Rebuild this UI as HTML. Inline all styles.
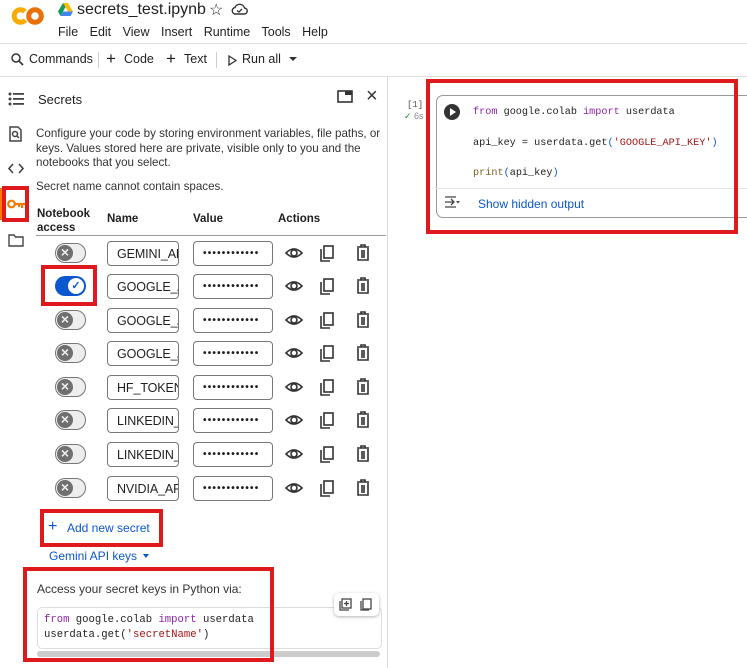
<!DOCTYPE html>
<html><head><meta charset="utf-8"><style>
*{box-sizing:border-box;margin:0;padding:0}
body{width:747px;height:668px;overflow:hidden;background:#fff;font-family:"Liberation Sans",Arial,sans-serif;color:#1f1f1f;position:relative}
.a{position:absolute}
.mono{font-family:"Liberation Mono",monospace}
.red{position:absolute;border:4px solid #e0191c}
.tg{position:absolute;left:55px;width:31px;height:20px;border-radius:10px;border:1px solid #777;background:#eee}
.tg::after{content:"×";position:absolute;left:1px;top:1px;width:16px;height:16px;border-radius:50%;background:#6f6f6f;color:#eee;font-size:14px;line-height:15px;text-align:center;font-weight:bold}
.nm{position:absolute;left:107px;width:72px;height:25px;border:1px solid #777;border-radius:4px;font-size:12.5px;padding:5px 0 0 9px;overflow:hidden;white-space:nowrap;letter-spacing:-.1px}
.vl{position:absolute;left:193px;width:80px;height:25px;border:1px solid #777;border-radius:4px;font-size:10px;padding:6px 0 0 9px;letter-spacing:1.2px;font-weight:bold;overflow:hidden;white-space:nowrap}
</style></head><body>
<!-- header -->
<svg class="a" style="left:11px;top:6px" width="34" height="20" viewBox="0 0 34 20"><circle cx="9.5" cy="10" r="6.3" fill="none" stroke="#f9ab00" stroke-width="5" stroke-dasharray="30 10" transform="rotate(40 9.5 10)"/><circle cx="24" cy="10" r="6.3" fill="none" stroke="#e8710a" stroke-width="5"/></svg>
<svg class="a" style="left:58px;top:3px" width="15" height="13" viewBox="0 0 15 13"><path d="M5 0h5l5 8.5h-5z" fill="#fbbc04"/><path d="M5 0L0 8.5l2.5 4.5L7.5 4z" fill="#0f9d58"/><path d="M2.5 13h10l2.5-4.5H5z" fill="#4285f4"/></svg>
<div class="a" style="left:77px;top:1px;font-size:16px;color:#1f1f1f">secrets_test.ipynb</div>
<div class="a" style="left:209px;top:0px;font-size:16px">☆</div>
<svg class="a" style="left:231px;top:3px" width="17" height="12" viewBox="0 0 17 12"><path d="M4 11h9a3 3 0 0 0 .5-6A5 5 0 0 0 4 4.5 3.3 3.3 0 0 0 4 11z" fill="none" stroke="#333" stroke-width="1.4"/><path d="M6 7.5l2 1.5 3-3" fill="none" stroke="#333" stroke-width="1.3"/></svg>
<div class="a" style="left:58px;top:25px;font-size:12.5px;word-spacing:8px">File Edit View Insert Runtime Tools Help</div>
<div class="a" style="left:0;top:43px;width:747px;height:1px;background:#ddd"></div>
<!-- toolbar -->
<svg class="a" style="left:11px;top:53px" width="13" height="13" viewBox="0 0 13 13"><circle cx="5" cy="5" r="4" fill="none" stroke="#333" stroke-width="1.5"/><path d="M8 8l4 4" stroke="#333" stroke-width="1.6"/></svg>
<div class="a" style="left:29px;top:52px;font-size:12.5px">Commands</div>
<div class="a" style="left:98px;top:52px;width:1px;height:16px;background:#ccc"></div>
<div class="a" style="left:106px;top:49px;font-size:17px;font-weight:300">+</div>
<div class="a" style="left:124px;top:52px;font-size:12.5px">Code</div>
<div class="a" style="left:166px;top:49px;font-size:17px;font-weight:300">+</div>
<div class="a" style="left:184px;top:52px;font-size:12.5px">Text</div>
<div class="a" style="left:216px;top:52px;width:1px;height:16px;background:#ccc"></div>
<svg class="a" style="left:228px;top:55px" width="9" height="11" viewBox="0 0 9 11"><path d="M1 1l7 4.5L1 10z" fill="none" stroke="#333" stroke-width="1.3"/></svg>
<div class="a" style="left:242px;top:52px;font-size:12.5px">Run all</div>
<div class="a" style="left:289px;top:57px;width:0;height:0;border-left:4px solid transparent;border-right:4px solid transparent;border-top:4px solid #333"></div>
<div class="a" style="left:0;top:76px;width:747px;height:1px;background:#ddd"></div>
<div class="a" style="left:387px;top:77px;width:1px;height:591px;background:#ddd"></div>
<!-- left icons -->
<svg class="a" style="left:8px;top:92px" width="17" height="14" viewBox="0 0 17 14"><g fill="#444"><circle cx="2" cy="2" r="1.5"/><circle cx="2" cy="7" r="1.5"/><circle cx="2" cy="12" r="1.5"/><rect x="5" y="1" width="11" height="1.8"/><rect x="5" y="6" width="11" height="1.8"/><rect x="5" y="11" width="11" height="1.8"/></g></svg>
<svg class="a" style="left:9px;top:126px" width="13" height="16" viewBox="0 0 13 16"><path d="M1 1h8l3 3v11H1z" fill="none" stroke="#444" stroke-width="1.5"/><circle cx="6" cy="8" r="2.5" fill="none" stroke="#444" stroke-width="1.5"/><path d="M8 10l2 2" stroke="#444" stroke-width="1.5"/></svg>
<svg class="a" style="left:8px;top:163px" width="16" height="11" viewBox="0 0 16 11"><path d="M5 1L1 5.5 5 10M11 1l4 4.5L11 10" fill="none" stroke="#444" stroke-width="1.6"/></svg>
<div class="a" style="left:0;top:188px;width:3px;height:32px;background:#f57c00"></div>
<svg class="a" style="left:7px;top:199px" width="19" height="10" viewBox="0 0 19 10"><circle cx="4.5" cy="5" r="3.3" fill="none" stroke="#f57c00" stroke-width="2.2"/><path d="M8 5h10M15 5v4M12 5v3" stroke="#f57c00" stroke-width="2.2"/></svg>
<div class="red" style="left:2px;top:186px;width:27px;height:36px"></div>
<svg class="a" style="left:8px;top:234px" width="16" height="13" viewBox="0 0 16 13"><path d="M1 1h5l1.5 2H15v9H1z" fill="none" stroke="#444" stroke-width="1.4"/></svg>
<!-- panel -->
<div class="a" style="left:38px;top:92px;font-size:13px">Secrets</div>
<svg class="a" style="left:337px;top:90px" width="16" height="13" viewBox="0 0 16 13"><rect x="1" y="1" width="14" height="11" fill="none" stroke="#333" stroke-width="1.6"/><rect x="8" y="1" width="7" height="4" fill="#333"/></svg>
<div class="a" style="left:366px;top:85px;font-size:20px;color:#333">×</div>
<div class="a" style="left:36px;top:127px;font-size:11.6px;line-height:14.5px;width:345px;color:#333">Configure your code by storing environment variables, file paths, or keys. Values stored here are private, visible only to you and the notebooks that you select.</div>
<div class="a" style="left:36px;top:180px;font-size:11.6px;color:#333">Secret name cannot contain spaces.</div>
<div class="a" style="left:37px;top:207px;font-size:11.5px;font-weight:bold;line-height:14px">Notebook<br>access</div>
<div class="a" style="left:107px;top:213px;font-size:11.5px;font-weight:bold">Name</div>
<div class="a" style="left:193px;top:213px;font-size:11.5px;font-weight:bold">Value</div>
<div class="a" style="left:278px;top:213px;font-size:11.5px;font-weight:bold">Actions</div>
<div class="a" style="left:36px;top:235px;width:350px;height:1px;background:#999"></div>

<div class="tg" style="top:243px"></div><div class="nm" style="top:241px">GEMINI_AF</div><div class="vl" style="top:241px">••••••••••••</div>
<div class="a" style="left:55px;top:276px;width:31px;height:20px;border-radius:10px;background:#0b57d0"><div class="a" style="left:13px;top:2px;width:16px;height:16px;border-radius:50%;background:#fff;color:#0b57d0;font-size:11px;text-align:center;line-height:16px;font-weight:bold">✓</div></div>
<div class="red" style="left:41px;top:265px;width:56px;height:41px"></div>
<div class="nm" style="top:274px">GOOGLE_/</div><div class="vl" style="top:274px">••••••••••••</div>
<div class="tg" style="top:310px"></div><div class="nm" style="top:308px">GOOGLE_/</div><div class="vl" style="top:308px">••••••••••••</div>
<div class="tg" style="top:343px"></div><div class="nm" style="top:341px">GOOGLE_/</div><div class="vl" style="top:341px">••••••••••••</div>
<div class="tg" style="top:377px"></div><div class="nm" style="top:375px">HF_TOKEN</div><div class="vl" style="top:375px">••••••••••••</div>
<div class="tg" style="top:410px"></div><div class="nm" style="top:408px">LINKEDIN_</div><div class="vl" style="top:408px">••••••••••••</div>
<div class="tg" style="top:444px"></div><div class="nm" style="top:442px">LINKEDIN_</div><div class="vl" style="top:442px">••••••••••••</div>
<div class="tg" style="top:478px"></div><div class="nm" style="top:476px">NVIDIA_AP</div><div class="vl" style="top:476px">••••••••••••</div>

<svg class="a" style="left:284px;top:240px" width="92" height="260" viewBox="0 0 92 260">
<defs><g id="acts">
<path d="M2 13q8-8 16 0q-8 8-16 0z" fill="none" stroke="#333" stroke-width="1.6"/><circle cx="10" cy="13" r="3" fill="none" stroke="#333" stroke-width="1.6"/>
<rect x="40" y="6" width="9" height="12" fill="none" stroke="#333" stroke-width="1.6"/><path d="M37 9v12h9" fill="none" stroke="#333" stroke-width="1.6"/>
<path d="M73 7h12M77 7V5h4v2M74 8v12h10V8M78 10v8M80 10v8" fill="none" stroke="#333" stroke-width="1.6"/>
</g></defs>
<use href="#acts" y="0"/><use href="#acts" y="33"/><use href="#acts" y="67"/><use href="#acts" y="100"/><use href="#acts" y="134"/><use href="#acts" y="167"/><use href="#acts" y="201"/><use href="#acts" y="235"/>
</svg>

<div class="a" style="left:48px;top:518px;font-size:16px;color:#0b57d0">+</div>
<div class="a" style="left:67px;top:521px;font-size:12px;color:#0b57d0">Add new secret</div>
<div class="red" style="left:40px;top:509px;width:123px;height:38px"></div>
<div class="a" style="left:49px;top:549px;font-size:12px;color:#0b57d0">Gemini API keys</div>
<div class="a" style="left:143px;top:554px;width:0;height:0;border-left:3px solid transparent;border-right:3px solid transparent;border-top:4px solid #0b57d0"></div>
<div class="a" style="left:37px;top:582px;font-size:12px;color:#333">Access your secret keys in Python via:</div>
<div class="a" style="left:37px;top:607px;width:345px;height:42px;border:1px solid #ddd;border-radius:5px"></div>
<div class="a mono" style="left:44px;top:613px;font-size:10.6px;line-height:15px;white-space:pre"><span style="color:#8e24aa">from</span> google.colab <span style="color:#8e24aa">import</span> userdata
userdata.get(<span style="color:#a31515">'secretName'</span>)</div>
<div class="a" style="left:334px;top:593px;width:45px;height:23px;background:#fff;border-radius:5px;box-shadow:0 1px 3px rgba(0,0,0,.3)"></div>
<svg class="a" style="left:339px;top:598px" width="36" height="13" viewBox="0 0 36 13"><rect x="3" y="1" width="9" height="9" fill="none" stroke="#444" stroke-width="1.3"/><path d="M1 3v9h9M7.5 3v5M5 5.5h5" fill="none" stroke="#444" stroke-width="1.3"/><rect x="24" y="1" width="8" height="10" fill="none" stroke="#444" stroke-width="1.3"/><path d="M22 3v9h8" fill="none" stroke="#444" stroke-width="1.3"/></svg>
<div class="a" style="left:37px;top:651px;width:343px;height:6px;background:#ccc;border-radius:3px"></div>
<div class="red" style="left:23px;top:567px;width:251px;height:95px"></div>

<!-- notebook -->
<div class="a mono" style="left:407px;top:100px;font-size:9px;color:#555">[1]</div>
<div class="a" style="left:404px;top:111px;font-size:9px;color:#1e8e3e">✓ <span style="color:#888">6s</span></div>
<div class="a" style="left:436px;top:95px;width:320px;height:123px;border:1px solid #999;border-radius:7px"></div>
<div class="a" style="left:436px;top:188px;width:311px;height:1px;background:#e5e5e5"></div>
<div class="a" style="left:444px;top:104px;width:16px;height:16px;border-radius:50%;background:#333"><div class="a" style="left:6px;top:4px;border-top:4px solid transparent;border-bottom:4px solid transparent;border-left:6px solid #fff"></div></div>
<div class="a mono" style="left:473px;top:98px;font-size:10.2px;line-height:30.5px;white-space:pre"><span style="color:#8e24aa">from</span> google.colab <span style="color:#8e24aa">import</span> userdata
api_key = userdata.get<span style="color:#0b57d0">(</span><span style="color:#a31515">'GOOGLE_API_KEY'</span><span style="color:#0b57d0">)</span>
<span style="color:#795e26">print</span><span style="color:#0b57d0">(</span>api_key<span style="color:#0b57d0">)</span></div>
<svg class="a" style="left:444px;top:196px" width="17" height="12" viewBox="0 0 17 12"><path d="M1 1h11M1 11h11M1 6h9M7 3l3 3-3 3" fill="none" stroke="#444" stroke-width="1.3"/><path d="M12 5h4l-2 2.5z" fill="#444"/></svg>
<div class="a" style="left:478px;top:197px;font-size:12px;color:#0b57d0">Show hidden output</div>
<div class="red" style="left:426px;top:79px;width:312px;height:155px"></div>
</body></html>
